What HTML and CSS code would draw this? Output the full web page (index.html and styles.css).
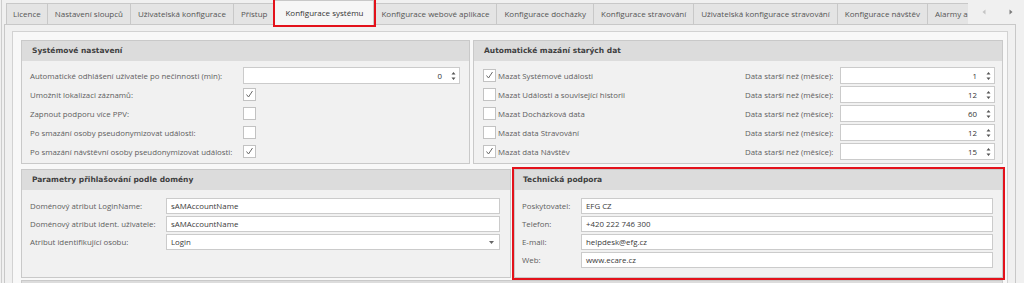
FILE: index.html
```html
<!DOCTYPE html>
<html lang="cs">
<head>
    <meta charset="UTF-8">
    <meta name="viewport" content="width=device-width, initial-scale=1.0">
    <title>Konfigurace systému</title>
    <link rel="stylesheet" href="styles.css">
</head>
<body>
<div class="window">
    <div class="tabstrip">
        <div class="tab-list">
            <div class="tab first">Licence</div>
            <div class="tab">Nastavení sloupců</div>
            <div class="tab">Uživatelská konfigurace</div>
            <div class="tab">Přístup</div>
            <div class="tab active">Konfigurace systému</div>
            <div class="tab">Konfigurace webové aplikace</div>
            <div class="tab">Konfigurace docházky</div>
            <div class="tab">Konfigurace stravování</div>
            <div class="tab">Uživatelská konfigurace stravování</div>
            <div class="tab">Konfigurace návštěv</div>
            <div class="tab cut">Alarmy a</div>
        </div>
        <div class="tab-nav">
            <svg class="nav-prev" width="4" height="6" viewBox="0 0 4 6"><path d="M3.5 0.5 L0.5 3 L3.5 5.5 Z"/></svg>
            <svg class="nav-next" width="4" height="6" viewBox="0 0 4 6"><path d="M0.5 0.5 L3.5 3 L0.5 5.5 Z"/></svg>
        </div>
    </div>

    <div class="tab-page">
        <div class="panel">
            <div class="group-row">
                <div class="group group-sys">
                    <div class="group-head">Systémové nastavení</div>
                    <div class="group-body form-sys">
                        <span class="label">Automatické odhlášení uživatele po nečinnosti (min):</span>
                        <div class="spin"><span>0</span><svg class="spin-arrows" width="5" height="10" viewBox="0 0 5 10"><path d="M0.5 3.5 L2.5 1 L4.5 3.5 Z M0.5 6.5 L2.5 9 L4.5 6.5 Z"/></svg></div>

                        <span class="label">Umožnit lokalizaci záznamů:</span>
                        <span class="check checked"><svg width="11" height="11" viewBox="0 0 11 11"><polyline points="2.5,5.5 4.5,8 8.5,2"/></svg></span>

                        <span class="label">Zapnout podporu více PPV:</span>
                        <span class="check"></span>

                        <span class="label">Po smazání osoby pseudonymizovat události:</span>
                        <span class="check"></span>

                        <span class="label">Po smazání návštěvní osoby pseudonymizovat události:</span>
                        <span class="check checked"><svg width="11" height="11" viewBox="0 0 11 11"><polyline points="2.5,5.5 4.5,8 8.5,2"/></svg></span>
                    </div>
                </div>

                <div class="group group-purge">
                    <div class="group-head">Automatické mazání starých dat</div>
                    <div class="group-body form-purge">
                        <span class="check checked"><svg width="11" height="11" viewBox="0 0 11 11"><polyline points="2.5,5.5 4.5,8 8.5,2"/></svg></span>
                        <span class="label">Mazat Systémové události</span>
                        <span class="label">Data starší než (měsíce):</span>
                        <div class="spin"><span>1</span><svg class="spin-arrows" width="5" height="10" viewBox="0 0 5 10"><path d="M0.5 3.5 L2.5 1 L4.5 3.5 Z M0.5 6.5 L2.5 9 L4.5 6.5 Z"/></svg></div>

                        <span class="check"></span>
                        <span class="label">Mazat Události a související historii</span>
                        <span class="label">Data starší než (měsíce):</span>
                        <div class="spin"><span>12</span><svg class="spin-arrows" width="5" height="10" viewBox="0 0 5 10"><path d="M0.5 3.5 L2.5 1 L4.5 3.5 Z M0.5 6.5 L2.5 9 L4.5 6.5 Z"/></svg></div>

                        <span class="check"></span>
                        <span class="label">Mazat Docházková data</span>
                        <span class="label">Data starší než (měsíce):</span>
                        <div class="spin"><span>60</span><svg class="spin-arrows" width="5" height="10" viewBox="0 0 5 10"><path d="M0.5 3.5 L2.5 1 L4.5 3.5 Z M0.5 6.5 L2.5 9 L4.5 6.5 Z"/></svg></div>

                        <span class="check"></span>
                        <span class="label">Mazat data Stravování</span>
                        <span class="label">Data starší než (měsíce):</span>
                        <div class="spin"><span>12</span><svg class="spin-arrows" width="5" height="10" viewBox="0 0 5 10"><path d="M0.5 3.5 L2.5 1 L4.5 3.5 Z M0.5 6.5 L2.5 9 L4.5 6.5 Z"/></svg></div>

                        <span class="check checked"><svg width="11" height="11" viewBox="0 0 11 11"><polyline points="2.5,5.5 4.5,8 8.5,2"/></svg></span>
                        <span class="label">Mazat data Návštěv</span>
                        <span class="label">Data starší než (měsíce):</span>
                        <div class="spin"><span>15</span><svg class="spin-arrows" width="5" height="10" viewBox="0 0 5 10"><path d="M0.5 3.5 L2.5 1 L4.5 3.5 Z M0.5 6.5 L2.5 9 L4.5 6.5 Z"/></svg></div>
                    </div>
                </div>
            </div>

            <div class="group-row row-second">
                <div class="group group-domain">
                    <div class="group-head">Parametry přihlašování podle domény</div>
                    <div class="group-body form-domain">
                        <span class="label">Doménový atribut LoginName:</span>
                        <div class="field">sAMAccountName</div>
                        <span class="label">Doménový atribut ident. uživatele:</span>
                        <div class="field">sAMAccountName</div>
                        <span class="label">Atribut identifikující osobu:</span>
                        <div class="field combo"><span>Login</span><svg width="5" height="3" viewBox="0 0 5 3"><path d="M0 0 L5 0 L2.5 3 Z"/></svg></div>
                    </div>
                </div>

                <div class="group group-support highlight">
                    <div class="group-head">Technická podpora</div>
                    <div class="group-body form-support">
                        <span class="label">Poskytovatel:</span>
                        <div class="field">EFG CZ</div>
                        <span class="label">Telefon:</span>
                        <div class="field">+420 222 746 300</div>
                        <span class="label">E-mail:</span>
                        <div class="field">helpdesk@efg.cz</div>
                        <span class="label">Web:</span>
                        <div class="field">www.ecare.cz</div>
                    </div>
                </div>
            </div>

            <div class="group-row row-next">
                <div class="group group-wide">
                    <div class="group-head"></div>
                </div>
            </div>
        </div>
    </div>
</div>
</body>
</html>
```

FILE: styles.css
```css
* {
    box-sizing: border-box;
}
html, body {
    margin: 0;
    height: 100%;
    overflow: hidden;
}
body {
    background: #f0f0f0;
    font-family: "Open Sans", "Noto Sans", sans-serif;
    font-size: 7.85px;
    color: #606060;
}
.window {
    margin-left: 1px;
    border-left: 1px solid #cdcdcd;
    height: 100%;
}

/* tabs */
.tabstrip {
    display: flex;
    align-items: flex-end;
    height: 24px;
    padding-left: 4px;
}
.tab-list {
    display: flex;
    align-items: flex-end;
    flex: 0 0 964px;
    height: 24px;
}
.tab {
    flex-shrink: 0;
    height: 21px;
    line-height: 20px;
    padding: 0 7px;
    border: 1px solid #c8c8c8;
    border-left: none;
    border-bottom: none;
    background: #e4e4e4;
    color: #555;
    font-size: 8px;
    white-space: nowrap;
}
.tab.first {
    border-left: 1px solid #c8c8c8;
    padding: 0 6px;
}
.tab.active {
    position: relative;
    z-index: 1;
    height: 25px;
    line-height: 24px;
    margin-bottom: -1px;
    padding: 0 10px;
    background: #f6f6f6;
    color: #333;
    outline: 2px solid #e3121b;
}
.tab.cut {
    width: 40px;
    overflow: hidden;
    border-right: none;
}
.tab-nav {
    display: flex;
    align-items: center;
    gap: 23px;
    height: 24px;
    padding-left: 12px;
}
.nav-prev {
    fill: #c4c4c4;
}
.nav-next {
    fill: #7c7c7c;
}

/* page + panel */
.tab-page {
    margin: 0 8px 0 2px;
    height: 270px;
    border: 1px solid #c8c8c8;
    background: #f0f0f0;
    padding: 6px 7px 0 7px;
}
.panel {
    height: 300px;
    border: 1px solid #d2d2d2;
    background: #f8f8f8;
    padding: 8px 4px 0 8px;
}
.group-row {
    display: flex;
    gap: 3px;
}
.row-second {
    margin-top: 5px;
}
.row-next {
    margin-top: 2px;
}
.group {
    border: 1px solid #c9c9c9;
    background: #f1f1f1;
}
.group-sys {
    width: 449px;
}
.group-purge,
.group-support,
.group-wide {
    flex: 1;
}
.group-domain {
    width: 490px;
}
.highlight {
    outline: 2px solid #e3121b;
}
.group-head {
    height: 20px;
    line-height: 20px;
    padding-left: 10px;
    background: #dcdcdc;
    font-family: "DejaVu Sans", Verdana, sans-serif;
    font-size: 7.5px;
    font-weight: bold;
    color: #404040;
}
.group-support .group-head {
    padding-left: 8px;
}
.group-body {
    display: grid;
    align-items: center;
}
.label {
    white-space: nowrap;
}

/* forms */
.form-sys {
    grid-template-columns: 213px 1fr;
    grid-auto-rows: 19px;
    padding: 5px 9px 2px 8px;
}
.form-purge {
    grid-template-columns: 14px 248px 95px 1fr;
    grid-auto-rows: 19px;
    padding: 5px 7px 2px 9px;
}
.form-purge .check + .label {
    padding-left: 1px;
}
.form-domain {
    grid-template-columns: 136px 1fr;
    grid-auto-rows: 16px;
    row-gap: 2px;
    padding: 8px 10px 9px 8px;
}
.form-support {
    grid-template-columns: 59px 1fr;
    grid-auto-rows: 16px;
    row-gap: 2px;
    padding: 8px 9px 9px 7px;
}

.spin {
    display: flex;
    align-items: center;
    justify-content: flex-end;
    height: 17px;
    padding-right: 3px;
    border: 1px solid #cbcbcb;
    background: #fff;
    color: #333;
}
.spin-arrows {
    margin-left: 9px;
    fill: #555;
}
.check {
    display: flex;
    align-items: center;
    justify-content: center;
    width: 13px;
    height: 13px;
    border: 1px solid #c2c2c2;
    background: #fff;
}
.check svg {
    fill: none;
    stroke: #6a6a6a;
    stroke-width: 1;
}
.field {
    height: 16px;
    line-height: 14px;
    padding-left: 4px;
    border: 1px solid #cbcbcb;
    background: #fff;
    color: #3a3a3a;
    white-space: nowrap;
}
.combo {
    display: flex;
    align-items: center;
    justify-content: space-between;
    padding-right: 5px;
}
.combo svg {
    fill: #666;
}
```
